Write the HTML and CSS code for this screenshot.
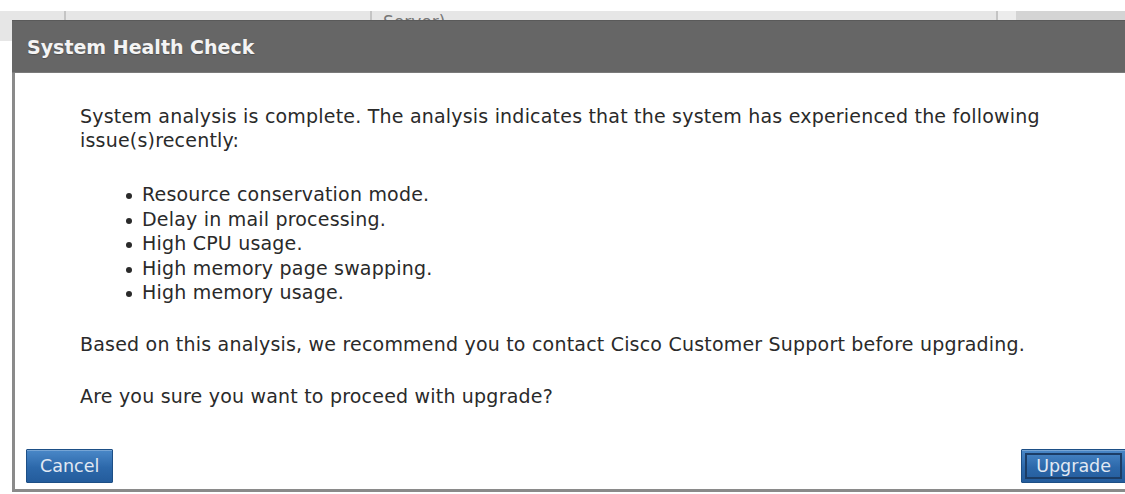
FILE: index.html
```html
<!DOCTYPE html>
<html lang="en">
<head>
<meta charset="utf-8">
<title>System Health Check</title>
<link rel="stylesheet" href="styles.css">
</head>
<body>
<div class="page">
  <div class="grid-row">
    <div class="cell c1"></div>
    <div class="cell c2"></div>
    <div class="cell c3">Server)</div>
    <div class="cell c4"></div>
    <div class="cell c5"></div>
  </div>
</div>

<div class="dialog" role="dialog" aria-labelledby="dlg-title">
  <div class="dialog-header">
    <h1 id="dlg-title" class="dialog-title">System Health Check</h1>
  </div>
  <div class="dialog-body">
    <p class="intro">System analysis is complete. The analysis indicates that the system has experienced the following issue(s)recently:</p>
    <ul class="issues">
      <li>Resource conservation mode.</li>
      <li>Delay in mail processing.</li>
      <li>High CPU usage.</li>
      <li>High memory page swapping.</li>
      <li>High memory usage.</li>
    </ul>
    <p class="advice">Based on this analysis, we recommend you to contact Cisco Customer Support before upgrading.</p>
    <p class="question">Are you sure you want to proceed with upgrade?</p>
  </div>
  <div class="dialog-footer">
    <button class="btn" type="button">Cancel</button>
    <button class="btn btn-focus" type="button">Upgrade</button>
  </div>
</div>
</body>
</html>
```

FILE: styles.css
```css
html, body {
  margin: 0;
  padding: 0;
  background: #ffffff;
}

body {
  width: 1125px;
  height: 494px;
  overflow: hidden;
  position: relative;
  font-family: "DejaVu Sans", sans-serif;
}

/* underlying settings table, mostly hidden by the modal */
.page {
  padding-top: 11px;
}

.grid-row {
  display: flex;
  height: 30px;
  background: #e6e6e6;
}

.cell {
  box-sizing: border-box;
  border-right: 2px solid #c4c4c4;
}

.c1 { width: 66px; }
.c2 { width: 306px; }
.c3 {
  width: 626px;
  padding: 1px 0 0 11px;
  font-size: 17px;
  color: #777;
  line-height: 20px;
}
.c4 { width: 18px; border-right: none; background: #ececec; }
.c5 { flex: 1; background: #d4d4d4; border-right: none; }

/* modal dialog */
.dialog {
  position: absolute;
  left: 12px;
  top: 20px;
  width: 1125px;
  height: 472px;
  box-sizing: border-box;
  display: flex;
  flex-direction: column;
  background: #ffffff;
  border-left: 3px solid #8a8a8a;
  border-bottom: 3px solid #8a8a8a;
}

.dialog-header {
  height: 53px;
  box-sizing: border-box;
  background: #666666;
  border-top: 1px solid #5a5a5a;
  border-bottom: 1px solid #7a7a7a;
  margin-left: -3px;
  display: flex;
  align-items: center;
  padding-left: 15px;
}

.dialog-title {
  margin: 0;
  font-family: "DejaVu Sans", sans-serif;
  font-weight: bold;
  font-size: 19px;
  color: #f4f4f4;
  text-shadow: 0 1px 1px rgba(0, 0, 0, 0.25);
}

.dialog-body {
  flex: 1;
  padding: 32px 0 0 65px;
  color: #2a2a2a;
  font-size: 19px;
  letter-spacing: 0.2px;
  line-height: 24.5px;
}

.dialog-body p {
  margin: 0;
}

.intro {
  width: 990px;
  line-height: 23.5px;
}

.issues {
  margin: 30px 0 0 0;
  padding-left: 0;
  list-style: none;
}

.issues li {
  position: relative;
  padding-left: 18px;
  margin-left: 44px;
}

.issues li::before {
  content: "";
  position: absolute;
  left: 2px;
  top: 11px;
  width: 6px;
  height: 6px;
  border-radius: 50%;
  background: #2a2a2a;
}

.dialog-body .advice {
  margin-top: 27px;
}

.dialog-body .question {
  margin-top: 28px;
}

.dialog-footer {
  display: flex;
  justify-content: space-between;
  align-items: center;
  padding: 0 0 6px 11px;
  width: 1111px;
  box-sizing: border-box;
}

.btn {
  height: 34px;
  padding: 0 13px;
  font-family: "DejaVu Sans", sans-serif;
  font-size: 17.5px;
  color: #e2e9f3;
  background: linear-gradient(#4a88c8, #2c68aa 55%, #245c9c);
  border: 1px solid #1d4f86;
  border-radius: 1px;
  box-shadow: inset 0 1px 0 rgba(255, 255, 255, 0.25);
}

.btn-focus {
  outline: 2px solid #1c3d66;
  outline-offset: -6px;
  padding: 0 14px;
}
```
